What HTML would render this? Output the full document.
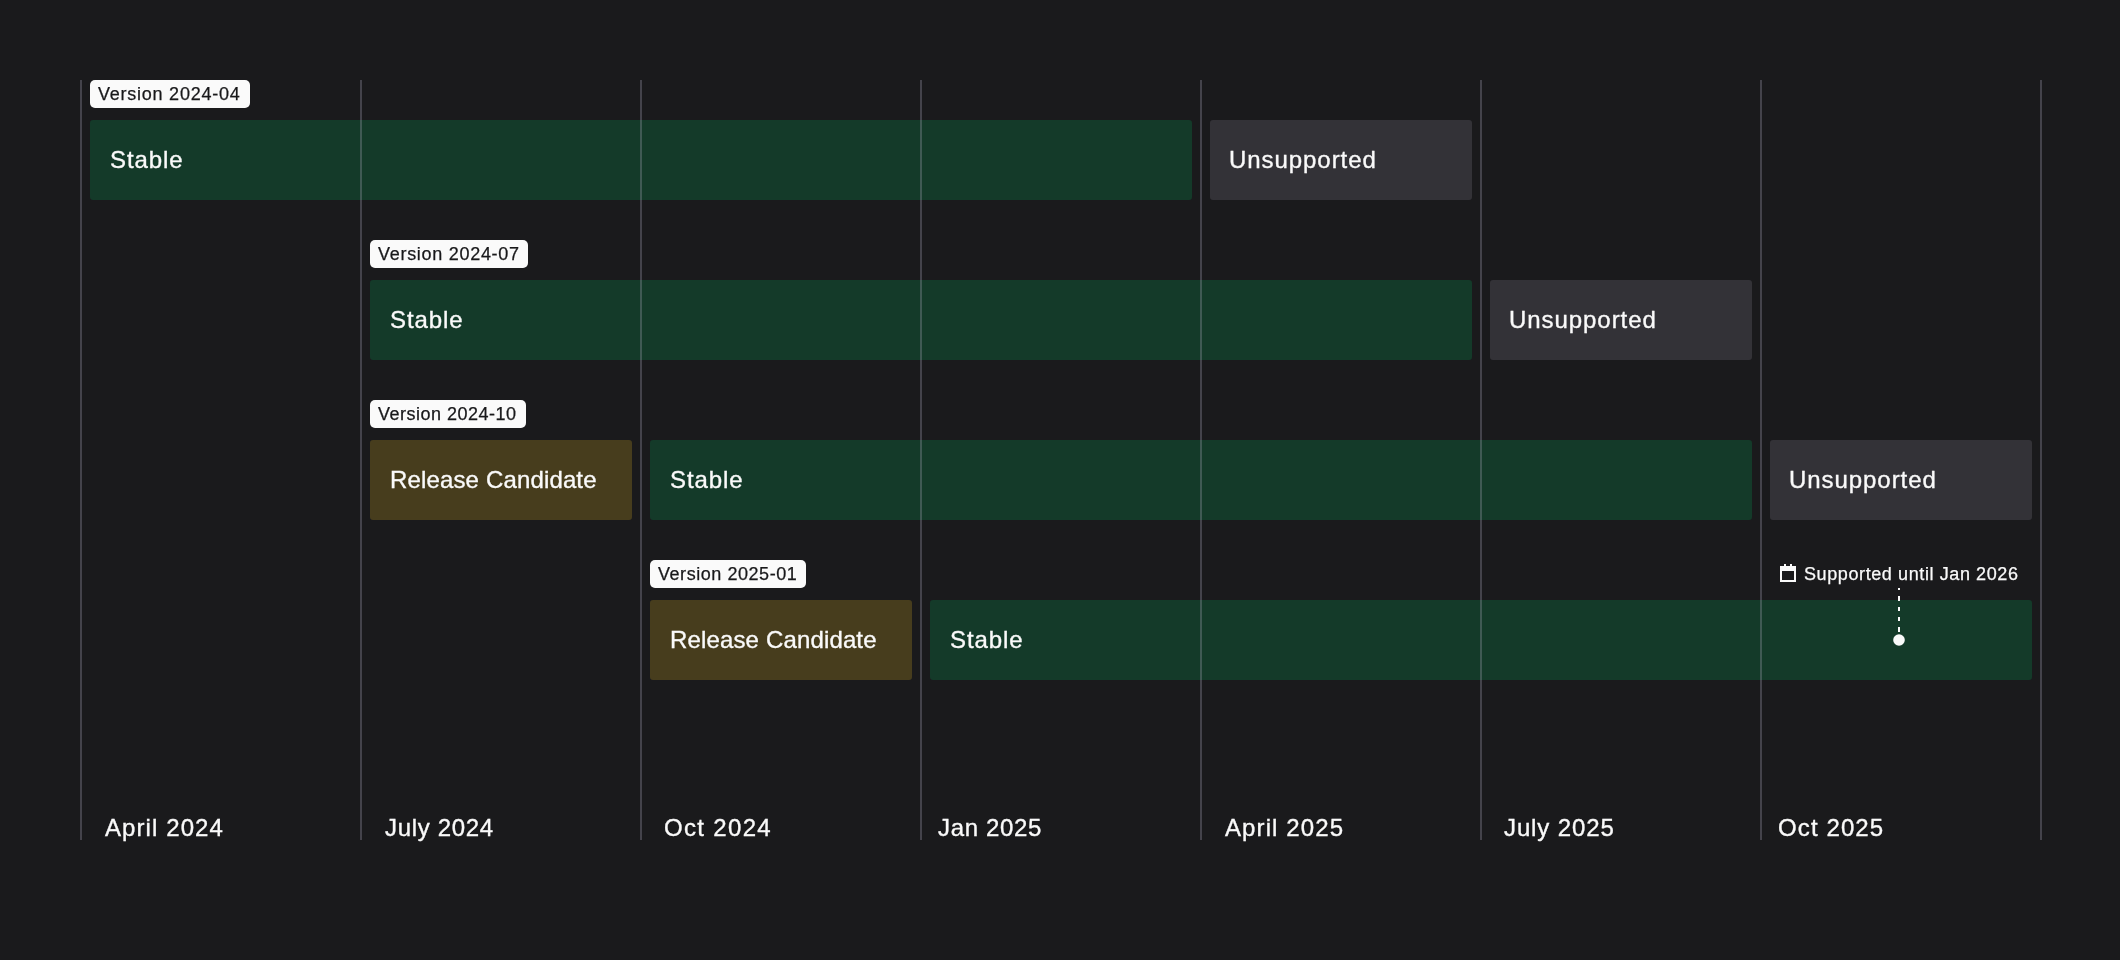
<!DOCTYPE html>
<html><head><meta charset="utf-8"><style>
html,body{margin:0;padding:0;}
body{width:2120px;height:960px;background:#1a1a1c;position:relative;overflow:hidden;font-family:"Liberation Sans",sans-serif;}
.bar{position:absolute;height:80px;border-radius:3px;}
.bt,.at{position:absolute;will-change:transform;-webkit-text-stroke:0.35px #fafafa;font-size:24px;line-height:24px;color:#fafafa;white-space:nowrap;}
.gl{position:absolute;top:80px;width:2px;height:760px;background:rgba(180,176,197,0.28);}
.lbl{position:absolute;height:28px;background:#fafafa;border-radius:5px;}
.lt{position:absolute;will-change:transform;-webkit-text-stroke:0.25px #18181a;font-size:18px;line-height:18px;color:#18181a;white-space:nowrap;}
.st{position:absolute;will-change:transform;-webkit-text-stroke:0.25px #fafafa;font-size:18px;line-height:18px;color:#fafafa;white-space:nowrap;}
</style></head><body>
<div class="bar" style="left:90px;top:120px;width:1102px;background:#143a29"></div>
<div class="bt" style="left:110px;top:148px;letter-spacing:0.9px">Stable</div>
<div class="bar" style="left:1210px;top:120px;width:262px;background:#333237"></div>
<div class="bt" style="left:1229px;top:148px;letter-spacing:0.94px">Unsupported</div>
<div class="bar" style="left:370px;top:280px;width:1102px;background:#143a29"></div>
<div class="bt" style="left:390px;top:308px;letter-spacing:0.9px">Stable</div>
<div class="bar" style="left:1490px;top:280px;width:262px;background:#333237"></div>
<div class="bt" style="left:1509px;top:308px;letter-spacing:0.94px">Unsupported</div>
<div class="bar" style="left:370px;top:440px;width:262px;background:#473d1d"></div>
<div class="bt" style="left:390px;top:468px;letter-spacing:0.15px">Release Candidate</div>
<div class="bar" style="left:650px;top:440px;width:1102px;background:#143a29"></div>
<div class="bt" style="left:670px;top:468px;letter-spacing:0.9px">Stable</div>
<div class="bar" style="left:1770px;top:440px;width:262px;background:#333237"></div>
<div class="bt" style="left:1789px;top:468px;letter-spacing:0.94px">Unsupported</div>
<div class="bar" style="left:650px;top:600px;width:262px;background:#473d1d"></div>
<div class="bt" style="left:670px;top:628px;letter-spacing:0.15px">Release Candidate</div>
<div class="bar" style="left:930px;top:600px;width:1102px;background:#143a29"></div>
<div class="bt" style="left:950px;top:628px;letter-spacing:0.9px">Stable</div>
<div class="gl" style="left:80px"></div>
<div class="gl" style="left:360px"></div>
<div class="gl" style="left:640px"></div>
<div class="gl" style="left:920px"></div>
<div class="gl" style="left:1200px"></div>
<div class="gl" style="left:1480px"></div>
<div class="gl" style="left:1760px"></div>
<div class="gl" style="left:2040px"></div>
<div class="lbl" style="left:90px;top:80px;width:160px"></div>
<div class="lt" style="left:98px;top:85px;letter-spacing:0.76px">Version 2024-04</div>
<div class="lbl" style="left:370px;top:240px;width:158px"></div>
<div class="lt" style="left:378px;top:245px;letter-spacing:0.71px">Version 2024-07</div>
<div class="lbl" style="left:370px;top:400px;width:156px"></div>
<div class="lt" style="left:378px;top:405px;letter-spacing:0.49px">Version 2024-10</div>
<div class="lbl" style="left:650px;top:560px;width:156px"></div>
<div class="lt" style="left:658px;top:565px;letter-spacing:0.55px">Version 2025-01</div>
<div class="at" style="left:104.5px;top:816px;letter-spacing:1.09px">April 2024</div>
<div class="at" style="left:384.7px;top:816px;letter-spacing:0.68px">July 2024</div>
<div class="at" style="left:663.7px;top:816px;letter-spacing:1.33px">Oct 2024</div>
<div class="at" style="left:938.4px;top:816px;letter-spacing:0.66px">Jan 2025</div>
<div class="at" style="left:1224.8px;top:816px;letter-spacing:1.11px">April 2025</div>
<div class="at" style="left:1503.7px;top:816px;letter-spacing:0.88px">July 2025</div>
<div class="at" style="left:1778px;top:816px;letter-spacing:1.11px">Oct 2025</div>
<svg class="cal" style="position:absolute;left:1780px;top:564px" width="16" height="18" viewBox="0 0 16 18"><path fill="#fafafa" fill-rule="evenodd" d="M4 0h2v2H4zM10 0h2v2h-2zM0 2h16v16H0zM2 7h12v9H2z"/></svg>
<div class="st" style="left:1803.5px;top:565px;letter-spacing:0.6px">Supported until Jan 2026</div>
<svg style="position:absolute;left:1889px;top:580px" width="20" height="70"><g fill="#fafafa"><rect x="9" y="8" width="2" height="2"/><rect x="9" y="16" width="2" height="5"/><rect x="9" y="27" width="2" height="4"/><rect x="9" y="37" width="2" height="4"/><rect x="9" y="47" width="2" height="5"/><circle cx="10" cy="60" r="5.8"/></g></svg>
</body></html>
